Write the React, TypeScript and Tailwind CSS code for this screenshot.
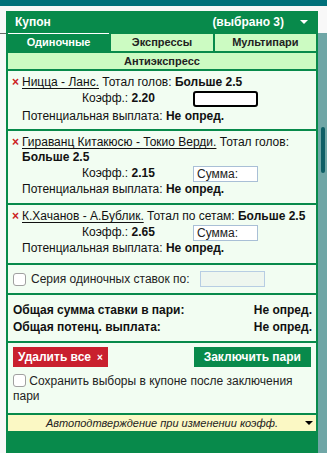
import React from "react";

const Check = () => (
  <span className="inline-block w-[13px] h-[13px] shrink-0 rounded-[3px] border border-[#a0a0a0] bg-white align-[-2px]" />
);

const Coef = ({ value, focused }: { value: string; focused?: boolean }) => (
  <div className="flex h-[17px] items-center pl-[60px]">
    <span className="w-[111px]">
      Коэфф.: <b>{value}</b>
    </span>
    {focused ? (
      <span className="h-[16px] w-[65px] rounded-[3px] border-2 border-black bg-white" />
    ) : (
      <input
        readOnly
        placeholder="Сумма:"
        className="h-[16px] w-[65px] border border-[#a9bfd6] bg-white px-[3px] text-[12px] leading-[14px] text-[#222] outline-none placeholder:text-[#222]"
      />
    )}
  </div>
);

const Bet = ({
  name,
  market,
  pick,
  coef,
  focused,
  h,
}: {
  name: string;
  market: string;
  pick: string;
  coef: string;
  focused?: boolean;
  h: string;
}) => (
  <div className={`${h} bg-[#f2fdf2] pl-[4px] pr-[2px] pt-[4px] leading-[15px]`}>
    <div className="flex">
      <span className="w-[10px] shrink-0 text-[12px] font-bold text-[#cc2222]">×</span>
      <div>
        <span className="underline underline-offset-[2px]">{name}</span> {market} <b>{pick}</b>
      </div>
    </div>
    <div className="pl-[10px]">
      <Coef value={coef} focused={focused} />
      <div className={focused ? "mt-[2px]" : ""}>
        Потенциальная выплата: <b>Не опред.</b>
      </div>
    </div>
  </div>
);

export default function App() {
  return (
    <div className="h-[453px] w-[327px] overflow-hidden bg-[#f8f8f8] font-['Liberation_Sans',Arial,sans-serif] text-[12px] text-[#111]">
      <div className="h-[6px] bg-[#00707a]" />
      <div className="flex">
        <div className="w-[6px] pt-[27px]">
          <div className="h-px bg-[#666]" />
        </div>

        <div className="mt-[5px] flex w-[312px] flex-col bg-[#088a4b]">
          <div className="flex h-[22px] items-center pl-[9px] pr-[10px] text-[12px] font-bold text-white">
            <span className="flex-1">Купон</span>
            <span>(выбрано 3)</span>
            <span className="ml-[16px] h-0 w-0 border-x-[4px] border-t-[4px] border-x-transparent border-t-white" />
          </div>

          <div className="flex flex-col gap-[2px] px-[2px] pb-[2px]">
            <div className="grid h-[18px] grid-cols-3 gap-[2px] text-[11px] font-bold">
              <div className="flex items-center justify-center border-t border-white bg-[#088a4b] text-white">
                Одиночные
              </div>
              <div className="flex items-center justify-center border-t border-[#088a4b] bg-[#ccfbc2] text-[#222]">
                Экспрессы
              </div>
              <div className="flex items-center justify-center border-t border-[#088a4b] bg-[#ccfbc2] text-[#222]">
                Мультипари
              </div>
            </div>
            <div className="flex h-[16px] items-center justify-center bg-[#ccfbc2] text-[11px] font-bold text-[#222]">
              Антиэкспресс
            </div>

            <Bet h="h-[58px]" name="Ницца - Ланс." market="Тотал голов:" pick="Больше 2.5" coef="2.20" focused />
            <Bet
              h="h-[72px]"
              name="Гираванц Китакюсю - Токио Верди."
              market="Тотал голов:"
              pick="Больше 2.5"
              coef="2.15"
            />
            <Bet h="h-[58px]" name="К.Хачанов - А.Бублик." market="Тотал по сетам:" pick="Больше 2.5" coef="2.65" />

            <div className="flex h-[28px] items-center bg-[#f2fdf2] pl-[5px]">
              <Check />
              <span className="ml-[5px] text-[#222]">Серия одиночных ставок по:</span>
              <span className="ml-[10px] h-[16px] w-[65px] border border-[#b7cde3] bg-[#eef6ef]" />
            </div>

            <div className="h-[46px] bg-[#f2fdf2] pl-[5px] pr-[4px] pt-[7px] font-bold leading-[17px]">
              <div className="flex justify-between">
                <span>Общая сумма ставки в пари:</span>
                <span>Не опред.</span>
              </div>
              <div className="flex justify-between">
                <span>Общая потенц. выплата:</span>
                <span>Не опред.</span>
              </div>
            </div>

            <div className="h-[70px] bg-[#f2fdf2] px-[5px] pt-[4px]">
              <div className="flex justify-between">
                <button className="flex h-[20px] items-center gap-[6px] bg-[#c9202e] pl-[5px] pr-[5px] text-[12px] font-bold text-white">
                  Удалить все
                  <span className="text-[10px]">×</span>
                </button>
                <button className="h-[20px] bg-[#088a4b] px-[10px] text-[12px] font-bold text-white">Заключить пари</button>
              </div>
              <div className="mt-[7px] leading-[15px] text-[#222]">
                <Check /> Сохранить выборы в купоне после заключения пари
              </div>
            </div>

            <div className="flex h-[16px] items-center bg-[#fbf8c4] text-[11px] italic text-[#222]">
              <span className="w-[14px]" />
              <span className="flex-1 text-center">Автоподтверждение при изменении коэфф.</span>
              <span className="flex w-[14px] justify-center">
                <span className="h-0 w-0 border-x-[4px] border-t-[4px] border-x-transparent border-t-black" />
              </span>
            </div>
          </div>
        </div>

        <div className="relative mt-[27px] h-[420px] w-[9px] bg-[#6fa6a6]">
          <div className="absolute left-[3px] top-[94px] h-[46px] w-[4px] rounded-full bg-[#0e5f66]" />
        </div>
      </div>
    </div>
  );
}
